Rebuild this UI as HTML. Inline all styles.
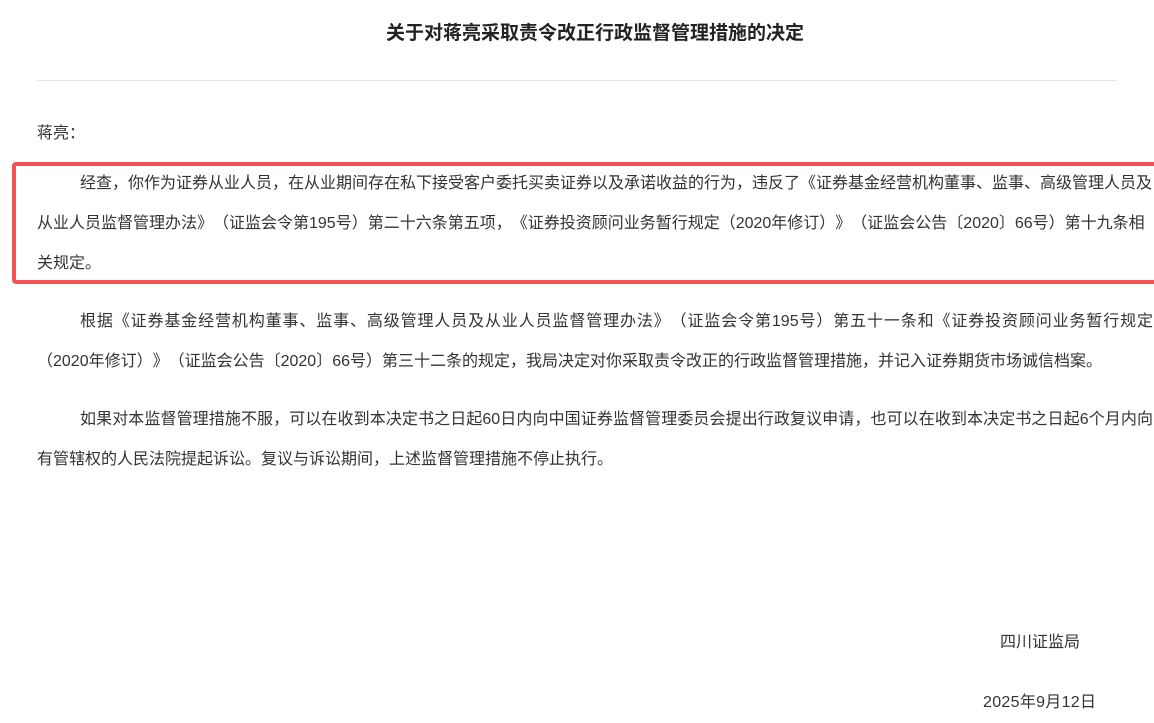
<!DOCTYPE html>
<html><head><meta charset="utf-8"><style>
body{margin:0;width:1154px;height:723px;overflow:hidden;background:#fff;font-family:"Liberation Sans","Noto Sans CJK SC",sans-serif;color:#333;font-size:16px;text-spacing-trim:space-all}
h1{position:absolute;left:0;width:1190px;top:21px;margin:0;text-align:center;font-size:19px;font-weight:bold;color:#222;line-height:26px}
.hr{position:absolute;left:37px;top:80px;width:1080px;height:1px;background:#e4e4e4}
.p{position:absolute;left:37px;width:1116px;line-height:40px}
.p div{white-space:nowrap}
.p div.j{text-align:justify;text-align-last:justify;white-space:normal;height:40px;overflow:visible}
.box{position:absolute;left:12px;top:162px;width:1150px;height:114px;border:4px solid #f25353;border-radius:4px}
.s{position:absolute;white-space:nowrap}
</style></head><body>
<h1>关于对蒋亮采取责令改正行政监督管理措施的决定</h1>
<div class="hr"></div>
<div class="s" style="left:37px;top:119px">蒋亮：</div>
<div class="box"></div>
<div class="p" style="top:164px">
<div style="padding-left:43px">经查，你作为证券从业人员，在从业期间存在私下接受客户委托买卖证券以及承诺收益的行为，违反了《证券基金经营机构董事、监事、高级管理人员及</div>
<div>从业人员监督管理办法》（证监会令第195号）第二十六条第五项，《证券投资顾问业务暂行规定（2020年修订）》（证监会公告〔2020〕66号）第十九条相</div>
<div>关规定。</div></div>
<div class="p" style="top:302px">
<div class="j" style="padding-left:43px">根据《证券基金经营机构董事、监事、高级管理人员及从业人员监督管理办法》（证监会令第195号）第五十一条和《证券投资顾问业务暂行规定</div>
<div>（2020年修订）》（证监会公告〔2020〕66号）第三十二条的规定，我局决定对你采取责令改正的行政监督管理措施，并记入证券期货市场诚信档案。</div></div>
<div class="p" style="top:400px">
<div class="j" style="padding-left:43px">如果对本监督管理措施不服，可以在收到本决定书之日起60日内向中国证券监督管理委员会提出行政复议申请，也可以在收到本决定书之日起6个月内向</div>
<div>有管辖权的人民法院提起诉讼。复议与诉讼期间，上述监督管理措施不停止执行。</div></div>
<div class="s" style="left:1000px;top:628px">四川证监局</div>
<div class="s" style="left:983px;top:688px;letter-spacing:0.3px">2025年9月12日</div>
</body></html>
